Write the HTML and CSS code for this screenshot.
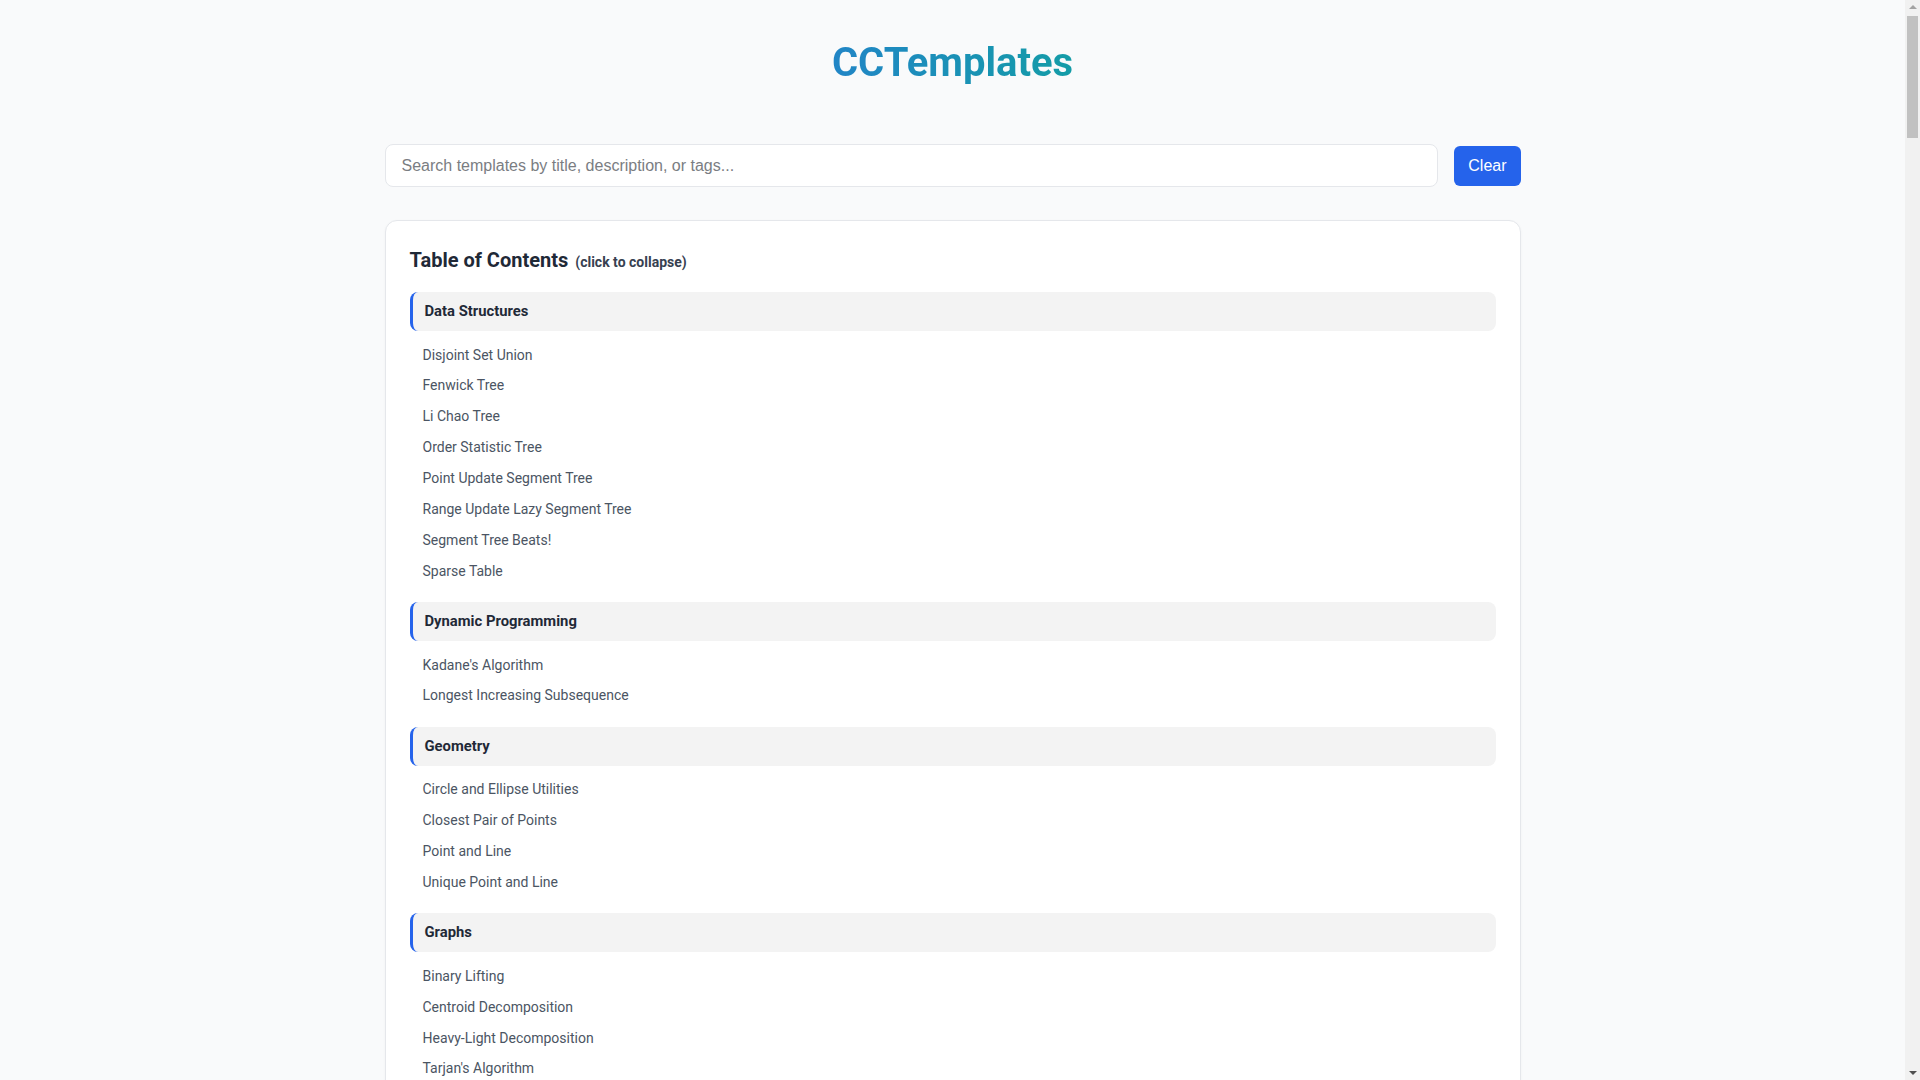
FILE: index.html
```html
<!DOCTYPE html>
<html lang="en">
<head>
  <meta charset="UTF-8">
  <meta name="viewport" content="width=device-width, initial-scale=1.0">
  <title>CCTemplates</title>
  <link rel="stylesheet" href="styles.css">
</head>
<body>
  <div class="page">
    <header class="site-header">
      <h1 class="brand"><span class="brand-text">CCTemplates</span></h1>
    </header>

    <div class="search-bar">
      <input type="text" id="buscar" class="search-input" placeholder="Search templates by title, description, or tags...">
      <button class="btn-clear" type="button">Clear</button>
    </div>

    <nav class="toc">
      <h2 class="toc-title">Table of Contents <span class="toc-hint">(click to collapse)</span></h2>

      <div class="toc-section">
        <div class="toc-category">Data Structures</div>
        <ul class="toc-list">
          <li><a href="#dsu">Disjoint Set Union</a></li>
          <li><a href="#fenwick">Fenwick Tree</a></li>
          <li><a href="#lichao">Li Chao Tree</a></li>
          <li><a href="#ost">Order Statistic Tree</a></li>
          <li><a href="#segtree">Point Update Segment Tree</a></li>
          <li><a href="#lazy">Range Update Lazy Segment Tree</a></li>
          <li><a href="#beats">Segment Tree Beats!</a></li>
          <li><a href="#sparse">Sparse Table</a></li>
        </ul>
      </div>

      <div class="toc-section">
        <div class="toc-category">Dynamic Programming</div>
        <ul class="toc-list">
          <li><a href="#kadane">Kadane's Algorithm</a></li>
          <li><a href="#lis">Longest Increasing Subsequence</a></li>
        </ul>
      </div>

      <div class="toc-section">
        <div class="toc-category">Geometry</div>
        <ul class="toc-list">
          <li><a href="#circle">Circle and Ellipse Utilities</a></li>
          <li><a href="#closest">Closest Pair of Points</a></li>
          <li><a href="#pointline">Point and Line</a></li>
          <li><a href="#unique">Unique Point and Line</a></li>
        </ul>
      </div>

      <div class="toc-section">
        <div class="toc-category">Graphs</div>
        <ul class="toc-list">
          <li><a href="#lifting">Binary Lifting</a></li>
          <li><a href="#centroid">Centroid Decomposition</a></li>
          <li><a href="#hld">Heavy-Light Decomposition</a></li>
          <li><a href="#tarjan">Tarjan's Algorithm</a></li>
          <li><a href="#toposort">Topological Sort</a></li>
        </ul>
      </div>

      <div class="toc-section">
        <div class="toc-category">Math</div>
        <ul class="toc-list">
          <li><a href="#modint">Modular Arithmetic</a></li>
          <li><a href="#sieve">Sieve of Eratosthenes</a></li>
        </ul>
      </div>

      <div class="toc-section">
        <div class="toc-category">Strings</div>
        <ul class="toc-list">
          <li><a href="#kmp">KMP</a></li>
          <li><a href="#zfunc">Z-Function</a></li>
        </ul>
      </div>
    </nav>
  </div>

  <!-- barra de scroll del navegador -->
  <div class="scrollbar">
    <span class="scroll-arrow up"></span>
    <span class="scroll-thumb"></span>
    <span class="scroll-arrow down"></span>
  </div>
</body>
</html>
```

FILE: styles.css
```css
body {
  margin: 0 15px 0 0;
  background: #f9fafb;
  font-family: Roboto, 'Noto Sans', 'Liberation Sans', sans-serif;
  color: #1f2937;
}
.page {
  box-sizing: border-box;
  max-width: 1200px;
  margin: 0 auto;
  padding: 39px 32px 40px;
}
.site-header {
  text-align: center;
}
.brand {
  margin: 0;
  font-size: 40px;
  line-height: 48px;
  font-weight: 700;
}
.brand-text {
  background: linear-gradient(90deg, #2185c6, #149ca7);
  -webkit-background-clip: text;
  background-clip: text;
  color: transparent;
}
.search-bar {
  display: flex;
  align-items: center;
  gap: 16px;
  margin-top: 57px;
}
.search-input {
  flex: 1;
  font-family: 'Liberation Sans', Arial, sans-serif;
  font-size: 16px;
  line-height: 19px;
  padding: 11px 16px;
  border: 1px solid #e5e7eb;
  border-radius: 8px;
  background: #fff;
  color: #1f2937;
  outline: none;
}
.search-input::placeholder {
  color: #7a7d82;
}
.btn-clear {
  font-family: 'Liberation Sans', Arial, sans-serif;
  font-size: 16px;
  line-height: 18px;
  padding: 11px 14px;
  border: none;
  border-radius: 6px;
  background: #2563eb;
  color: #fff;
  cursor: pointer;
}
.btn-clear:hover {
  background: #1d4ed8;
}
.toc {
  margin-top: 33px;
  background: #fff;
  border: 1px solid #e5e7eb;
  border-radius: 12px;
  padding: 24px;
  box-shadow: 0 1px 3px rgba(0,0,0,0.04);
}
.toc-title {
  margin: 0 0 15px;
  font-size: 20px;
  line-height: 30px;
  font-weight: 700;
  color: #1f2937;
  cursor: pointer;
}
.toc-hint {
  margin-left: 2px;
  font-size: 14px;
  font-weight: 700;
  color: #374151;
}
.toc-section {
  margin-bottom: 15.5px;
}
.toc-category {
  background: #f3f3f3;
  border-left: 3px solid #2563eb;
  border-radius: 8px;
  padding: 8px 12px;
  font-size: 14.8px;
  line-height: 23px;
  font-weight: 700;
  color: #1f2937;
}
.toc-list {
  list-style: none;
  margin: 8.5px 0 0;
  padding: 0;
}
.toc-list li a {
  display: block;
  padding: 5px 13px;
  font-size: 14px;
  line-height: 20.88px;
  color: #4b5563;
  text-decoration: none;
}
.toc-list li a:hover {
  color: #2563eb;
}
.scrollbar {
  position: fixed;
  top: 0;
  right: 0;
  bottom: 0;
  width: 15px;
  background: #f1f1f1;
  display: flex;
  flex-direction: column;
  align-items: center;
}
.scroll-arrow {
  width: 0;
  height: 0;
  border-left: 4px solid transparent;
  border-right: 4px solid transparent;
}
.scroll-arrow.up {
  margin-top: 5px;
  border-bottom: 4px solid #a3a3a3;
}
.scroll-arrow.down {
  margin-top: auto;
  margin-bottom: 5px;
  border-top: 4px solid #505050;
}
.scroll-thumb {
  width: 11px;
  height: 122px;
  margin-top: 7px;
  background: #c1c1c1;
}
```
